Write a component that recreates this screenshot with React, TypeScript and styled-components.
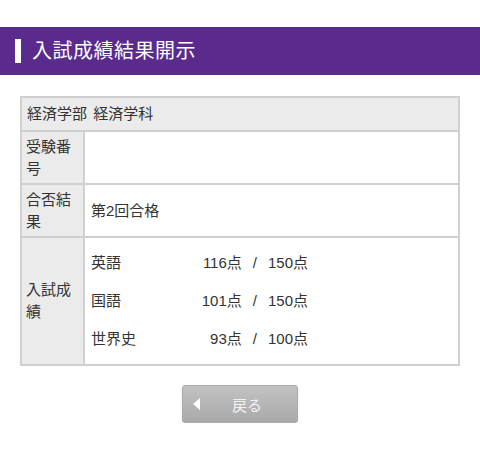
import React from "react";
import styled, { createGlobalStyle } from "styled-components";

const Global = createGlobalStyle`
  html, body { margin: 0; padding: 0; background: #fff; }
  body { font-family: "Liberation Sans", "Noto Sans CJK JP", sans-serif; color: #333; }
`;

const Page = styled.div`
  padding-top: 27px;
  width: 480px;
`;

const Header = styled.header`
  height: 48px;
  background: #5a2a8d;
  display: flex;
  align-items: center;
  padding-left: 15px;
  gap: 11px;
`;

const HeaderMark = styled.span`
  width: 6px;
  height: 24px;
  background: #fff;
`;

const Title = styled.h1`
  margin: 0;
  font-size: 20px;
  font-weight: 400;
  color: #fff;
  letter-spacing: 0.5px;
  line-height: 1;
`;

const Table = styled.table`
  margin: 21px 20px 0 20px;
  width: 440px;
  border-collapse: collapse;
  border: 2px solid #d0d0d0;
  font-size: 15px;
  line-height: 22px;
`;

const HeadCell = styled.th`
  background: #ebebeb;
  border: 2px solid #d0d0d0;
  text-align: left;
  font-weight: 400;
  padding: 4px 5px;
  height: 24px;
  word-spacing: 2px;
`;

const Label = styled.th`
  background: #ebebeb;
  border: 2px solid #d0d0d0;
  text-align: left;
  font-weight: 400;
  padding: 3.5px 4px;
  width: 53px;
  vertical-align: middle;
`;

const Value = styled.td`
  border: 2px solid #d0d0d0;
  padding: 0 6px;
  vertical-align: middle;
  background: #fff;
`;

const Scores = styled.div`
  display: grid;
  grid-template-columns: 104px 113px;
  grid-auto-rows: 38px;
  align-items: center;
  padding: 6px 0;
`;

const Score = styled.span`
  text-align: right;
  white-space: nowrap;
`;

const Sep = styled.span`
  padding: 0 11px;
`;

const ButtonRow = styled.div`
  display: flex;
  justify-content: center;
  margin-top: 19px;
`;

const BackButton = styled.button`
  width: 116px;
  height: 38px;
  border: 1px solid #aaa;
  border-radius: 3px;
  background: linear-gradient(#c2c2c2, #a9a9a9);
  color: #f2f2f2;
  font-family: inherit;
  font-size: 15px;
  display: flex;
  align-items: center;
  padding: 0 0 0 10px;
  gap: 32px;
  box-shadow: 0 1px 2px rgba(0,0,0,0.15);
`;

const Tri = styled.span`
  width: 0;
  height: 0;
  border-top: 6px solid transparent;
  border-bottom: 6px solid transparent;
  border-right: 7px solid #fff;
`;

const scores = [
  ["英語", "116点", "150点"],
  ["国語", "101点", "150点"],
  ["世界史", "93点", "100点"],
];

export default function App() {
  return (
    <Page>
      <Global />
      <Header>
        <HeaderMark />
        <Title>入試成績結果開示</Title>
      </Header>
      <Table>
        <tbody>
          <tr>
            <HeadCell colSpan={2}>経済学部 経済学科</HeadCell>
          </tr>
          <tr>
            <Label>受験番号</Label>
            <Value></Value>
          </tr>
          <tr>
            <Label>合否結果</Label>
            <Value>第2回合格</Value>
          </tr>
          <tr>
            <Label>入試成績</Label>
            <Value>
              <Scores>
                {scores.map(([s, a, b]) => (
                  <React.Fragment key={s}>
                    <span>{s}</span>
                    <Score>
                      {a}
                      <Sep>/</Sep>
                      {b}
                    </Score>
                  </React.Fragment>
                ))}
              </Scores>
            </Value>
          </tr>
        </tbody>
      </Table>
      <ButtonRow>
        <BackButton>
          <Tri />
          戻る
        </BackButton>
      </ButtonRow>
    </Page>
  );
}
